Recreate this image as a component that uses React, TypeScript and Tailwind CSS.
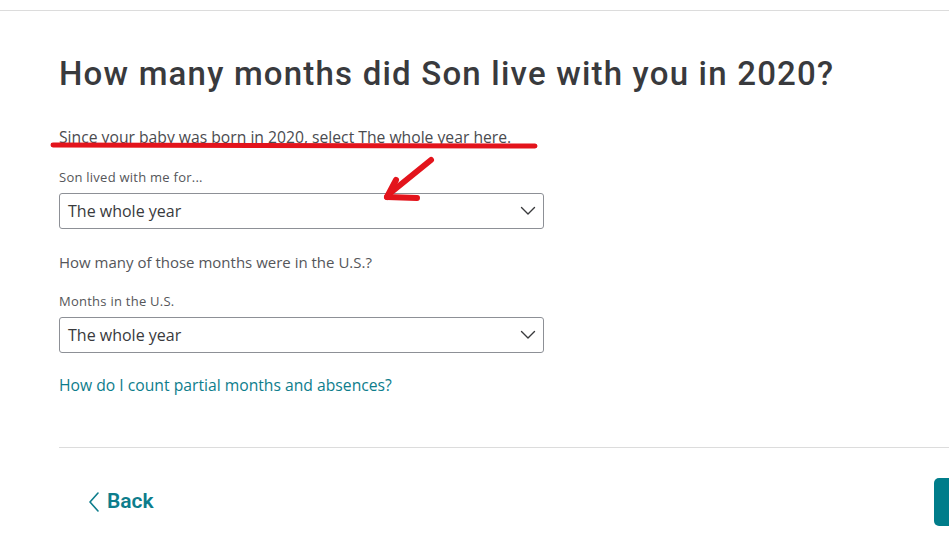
import React from "react";

function Chevron() {
  return (
    <svg width="16" height="10" viewBox="0 0 16 10" fill="none">
      <path d="M1.5 1.5 L8 8 L14.5 1.5" stroke="#393a3d" strokeWidth="1.4" strokeLinecap="round" strokeLinejoin="round" />
    </svg>
  );
}

function Select({ value }: { value: string }) {
  return (
    <div className="flex h-[36px] w-[485px] items-center justify-between rounded-[3px] border border-[#8d9096] bg-white pl-[8px] pr-[7px]">
      <span className="text-[16px] text-[#393a3d]">{value}</span>
      <Chevron />
    </div>
  );
}

export default function App() {
  return (
    <div className="relative h-[533px] w-[949px] overflow-hidden bg-white" style={{ fontFamily: "'Open Sans', Lato, sans-serif" }}>
      <div className="mt-[10px] h-px w-full bg-[#dcdcdc]" />
      <div className="pl-[59px]">
        <h1
          className="mt-[41px] text-[33px] font-medium leading-[44px] tracking-[1.2px] text-[#393a3d]"
          style={{ fontFamily: "Roboto, sans-serif" }}
        >
          How many months did Son live with you in 2020?
        </h1>
        <p className="mt-[31px] text-[15.7px] leading-[20px] text-[#4a4b4f]">
          Since your baby was born in 2020, select The whole year here.
        </p>
        <p className="mt-[21px] text-[13px] leading-[18px] tracking-[0.25px] text-[#55565a]">Son lived with me for...</p>
        <div className="mt-[7px]">
          <Select value="The whole year" />
        </div>
        <p className="mt-[23px] text-[15px] leading-[20px] text-[#55565a]">How many of those months were in the U.S.?</p>
        <p className="mt-[20px] text-[13px] leading-[18px] tracking-[0.25px] text-[#55565a]">Months in the U.S.</p>
        <div className="mt-[7px]">
          <Select value="The whole year" />
        </div>
        <p className="mt-[21px] text-[15.7px] leading-[22px] text-[#0d7d8c]">How do I count partial months and absences?</p>
        <div className="mt-[51px] h-px w-full bg-[#dcdcdc]" />
        <div className="mt-[30px] flex items-center justify-between">
          <div className="ml-[29px] flex items-center gap-[7px] text-[#0d7d8c]">
            <svg width="12" height="22" viewBox="0 0 12 22" fill="none">
              <path d="M10 2 L2 11 L10 20" stroke="#0d7d8c" strokeWidth="1.6" strokeLinecap="round" strokeLinejoin="round" />
            </svg>
            <span className="text-[21px] font-semibold" style={{ fontFamily: "Roboto, sans-serif" }}>Back</span>
          </div>
          <div className="h-[48px] w-[15px] rounded-l-[5px] bg-[#007d8a]" />
        </div>
      </div>
      {/* red annotation */}
      <svg className="pointer-events-none absolute left-0 top-0" width="949" height="533" viewBox="0 0 949 533" fill="none">
        <path d="M53 145 L535 146" stroke="#e3141c" strokeWidth="5" strokeLinecap="round" />
        <path d="M431 160 L389 194" stroke="#e3141c" strokeWidth="6" strokeLinecap="round" />
        <path d="M387 197 L417 198" stroke="#e3141c" strokeWidth="6" strokeLinecap="round" />
        <path d="M387 197 L396 180" stroke="#e3141c" strokeWidth="6" strokeLinecap="round" />
      </svg>
    </div>
  );
}
